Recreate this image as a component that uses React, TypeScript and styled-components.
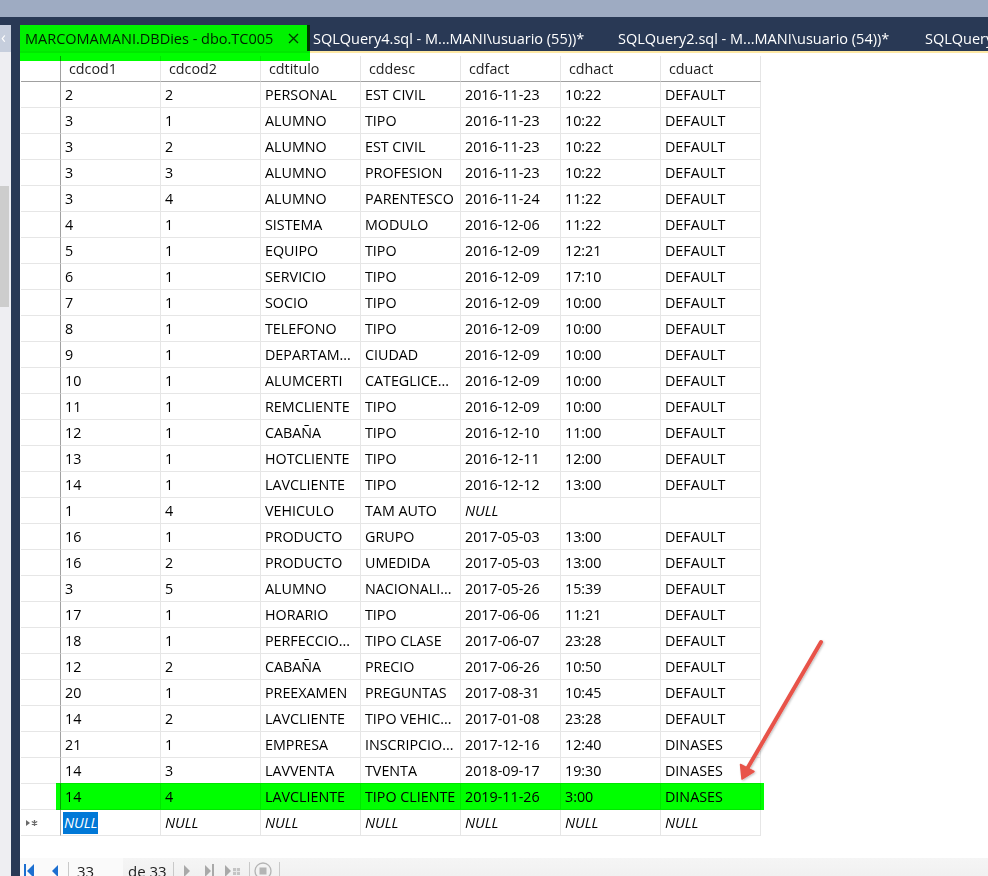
import React from 'react';
import styled, { createGlobalStyle, css } from 'styled-components';

const GlobalStyle = createGlobalStyle`
  html, body { margin: 0; padding: 0; background: #ffffff; }
  body { font-family: "Open Sans", "Noto Sans", "DejaVu Sans", sans-serif; }
  * { box-sizing: border-box; }
`;

const FONT = `"Open Sans", "Noto Sans", "DejaVu Sans", sans-serif`;

const Screen = styled.div`
  position: relative;
  width: 988px;
  height: 876px;
  overflow: hidden;
  display: flex;
  flex-direction: column;
  background: #ffffff;
  font-family: ${FONT};
`;

const TitleStrip = styled.div`
  height: 17px;
  flex: none;
  background: #9eabc2;
`;

const Body = styled.div`
  flex: 1;
  min-height: 0;
  display: flex;
  background: #293955;
`;

const SidePanel = styled.div`
  width: 11px;
  flex: none;
  margin-top: 8px;
  display: flex;
  flex-direction: column;
  background: #eeeef2;
`;

const SideHeader = styled.div`
  height: 27px;
  flex: none;
  background: #c6cedd;
  color: #ffffff;
  font-size: 16px;
  line-height: 24px;
  padding-left: 1px;
  overflow: hidden;
`;

const SideTrack = styled.div`
  flex: 1;
  display: flex;
  flex-direction: column;
  padding-top: 134px;
`;

const SideThumb = styled.div`
  width: 9px;
  height: 121px;
  background: #cdcdcd;
`;

const Workspace = styled.div`
  margin-left: 9px;
  flex: 1;
  min-width: 0;
  min-height: 0;
  display: flex;
  flex-direction: column;
`;

const TabWell = styled.div`
  height: 34px;
  flex: none;
  padding-top: 8px;
  display: flex;
  align-items: stretch;
  white-space: nowrap;
`;

const Tab = styled.div<{ $w: number; $active?: boolean }>`
  width: ${(p) => p.$w}px;
  flex: none;
  display: flex;
  align-items: center;
  gap: 15px;
  padding-left: ${(p) => (p.$active ? 5 : 6)}px;
  font-size: 14.5px;
  color: #ffffff;
  overflow: hidden;
  ${(p) =>
    p.$active &&
    css`
      background: #fff29d;
      color: #1e1e1e;
    `}
`;

const TabRule = styled.div`
  height: 2px;
  flex: none;
  background: #fde8a5;
`;

const Documentpane = styled.div`
  flex: 1;
  min-height: 0;
  overflow: hidden;
  display: flex;
  flex-direction: column;
  background: #ffffff;
  padding-top: 3px;
`;

const Grid = styled.div`
  width: 741px;
  flex: none;
  display: flex;
  flex-direction: column;
`;

const Row = styled.div<{ $mark?: boolean }>`
  position: relative;
  display: grid;
  grid-template-columns: 41px repeat(7, 100px);
  height: 26px;
  ${(p) =>
    p.$mark &&
    css`
      &::after {
        content: '';
        position: absolute;
        left: 36px;
        right: -3px;
        top: -1px;
        bottom: 0;
        background: #00ff00;
        mix-blend-mode: multiply;
        pointer-events: none;
      }
    `}
`;

const Cell = styled.div<{ $header?: boolean; $italic?: boolean }>`
  height: 26px;
  border-right: 1px solid #e6e6e6;
  border-bottom: 1px solid ${(p) => (p.$header ? '#a0a0a0' : '#e6e6e6')};
  padding: 1px 0 0 ${(p) => (p.$header ? 8 : 4)}px;
  font-size: 14.3px;
  line-height: 24px;
  white-space: nowrap;
  overflow: hidden;
  color: ${(p) => (p.$header ? '#1e1e1e' : '#000000')};
  font-style: ${(p) => (p.$italic ? 'italic' : 'normal')};
`;

const RowHead = styled.div<{ $header?: boolean }>`
  height: 26px;
  border-right: 1px solid #a0a0a0;
  border-bottom: 1px solid ${(p) => (p.$header ? '#a0a0a0' : '#e6e6e6')};
  margin-left: 1px;
  display: flex;
  align-items: center;
  padding-left: 5px;
`;

const Selected = styled.span`
  background: #0078d7;
  color: #ffffff;
  padding: 1px 1px 2px 1px;
  margin-left: -2px;
`;

const Gap = styled.div`
  height: 22px;
  flex: none;
`;

const NavBar = styled.div`
  height: 30px;
  flex: none;
  display: flex;
  align-items: flex-start;
  background: linear-gradient(#f5f5f5, #eeeeee);
  font-size: 15px;
  color: #1e1e1e;
`;

const NavLead = styled.div`
  display: flex;
  align-items: flex-start;
  height: 100%;
  padding: 6px 0 0 4px;
  background: #fafafa;
`;

const NavIcon = styled.svg<{ $gap?: number }>`
  display: block;
  flex: none;
  margin-right: ${(p) => p.$gap ?? 0}px;
`;

const NavSep = styled.div<{ $ml: number }>`
  width: 1px;
  height: 20px;
  margin-top: 4px;
  margin-left: ${(p) => p.$ml}px;
  background: #c9c9c9;
  flex: none;
`;

const PageBox = styled.div`
  width: 54px;
  height: 100%;
  padding: 3px 0 0 8px;
  line-height: 20px;
  background: #fafafa;
  flex: none;
`;

const PageOf = styled.div`
  margin-left: 5px;
  padding-top: 3px;
  line-height: 20px;
  width: 45px;
  flex: none;
`;

const NavRest = styled.div`
  display: flex;
  align-items: flex-start;
  padding-top: 6px;
`;

const HighlightTab = styled.div`
  position: absolute;
  left: 20px;
  top: 25px;
  width: 290px;
  height: 36px;
  background: #00ff00;
  mix-blend-mode: multiply;
  pointer-events: none;
`;

const ArrowLayer = styled.svg`
  position: absolute;
  left: 0;
  top: 0;
  pointer-events: none;
`;

const CloseGlyph = () => (
  <svg width="11" height="11" viewBox="0 0 11 11">
    <path d="M1 1 L10 10 M10 1 L1 10" stroke="#3a3a3a" strokeWidth="1.4" />
  </svg>
);

const columns = ['cdcod1', 'cdcod2', 'cdtitulo', 'cddesc', 'cdfact', 'cdhact', 'cduact'];

type R = [string, string, string, string, string, string, string];

const rows: R[] = [
  ['2', '2', 'PERSONAL', 'EST CIVIL', '2016-11-23', '10:22', 'DEFAULT'],
  ['3', '1', 'ALUMNO', 'TIPO', '2016-11-23', '10:22', 'DEFAULT'],
  ['3', '2', 'ALUMNO', 'EST CIVIL', '2016-11-23', '10:22', 'DEFAULT'],
  ['3', '3', 'ALUMNO', 'PROFESION', '2016-11-23', '10:22', 'DEFAULT'],
  ['3', '4', 'ALUMNO', 'PARENTESCO', '2016-11-24', '11:22', 'DEFAULT'],
  ['4', '1', 'SISTEMA', 'MODULO', '2016-12-06', '11:22', 'DEFAULT'],
  ['5', '1', 'EQUIPO', 'TIPO', '2016-12-09', '12:21', 'DEFAULT'],
  ['6', '1', 'SERVICIO', 'TIPO', '2016-12-09', '17:10', 'DEFAULT'],
  ['7', '1', 'SOCIO', 'TIPO', '2016-12-09', '10:00', 'DEFAULT'],
  ['8', '1', 'TELEFONO', 'TIPO', '2016-12-09', '10:00', 'DEFAULT'],
  ['9', '1', 'DEPARTAM...', 'CIUDAD', '2016-12-09', '10:00', 'DEFAULT'],
  ['10', '1', 'ALUMCERTI', 'CATEGLICE...', '2016-12-09', '10:00', 'DEFAULT'],
  ['11', '1', 'REMCLIENTE', 'TIPO', '2016-12-09', '10:00', 'DEFAULT'],
  ['12', '1', 'CABAÑA', 'TIPO', '2016-12-10', '11:00', 'DEFAULT'],
  ['13', '1', 'HOTCLIENTE', 'TIPO', '2016-12-11', '12:00', 'DEFAULT'],
  ['14', '1', 'LAVCLIENTE', 'TIPO', '2016-12-12', '13:00', 'DEFAULT'],
  ['1', '4', 'VEHICULO', 'TAM AUTO', 'NULL', '', ''],
  ['16', '1', 'PRODUCTO', 'GRUPO', '2017-05-03', '13:00', 'DEFAULT'],
  ['16', '2', 'PRODUCTO', 'UMEDIDA', '2017-05-03', '13:00', 'DEFAULT'],
  ['3', '5', 'ALUMNO', 'NACIONALI...', '2017-05-26', '15:39', 'DEFAULT'],
  ['17', '1', 'HORARIO', 'TIPO', '2017-06-06', '11:21', 'DEFAULT'],
  ['18', '1', 'PERFECCIO...', 'TIPO CLASE', '2017-06-07', '23:28', 'DEFAULT'],
  ['12', '2', 'CABAÑA', 'PRECIO', '2017-06-26', '10:50', 'DEFAULT'],
  ['20', '1', 'PREEXAMEN', 'PREGUNTAS', '2017-08-31', '10:45', 'DEFAULT'],
  ['14', '2', 'LAVCLIENTE', 'TIPO VEHIC...', '2017-01-08', '23:28', 'DEFAULT'],
  ['21', '1', 'EMPRESA', 'INSCRIPCIO...', '2017-12-16', '12:40', 'DINASES'],
  ['14', '3', 'LAVVENTA', 'TVENTA', '2018-09-17', '19:30', 'DINASES'],
  ['14', '4', 'LAVCLIENTE', 'TIPO CLIENTE', '2019-11-26', '3:00', 'DINASES'],
];

const NewRowMark = () => (
  <svg width="12" height="10" viewBox="0 0 12 10">
    <path d="M0 2 L4 5 L0 8 Z" fill="#6a6a6a" />
    <path d="M8.5 2 V8 M5.8 3.5 L11.2 6.5 M11.2 3.5 L5.8 6.5" stroke="#6a6a6a" strokeWidth="1.3" />
  </svg>
);

export default function App() {
  return (
    <>
      <GlobalStyle />
      <Screen>
        <TitleStrip />
        <Body>
          <SidePanel>
            <SideHeader>‹</SideHeader>
            <SideTrack>
              <SideThumb />
            </SideTrack>
          </SidePanel>
          <Workspace>
            <TabWell>
              <Tab $w={287} $active>
                <span>MARCOMAMANI.DBDies - dbo.TC005</span>
                <CloseGlyph />
              </Tab>
              <Tab $w={305}>SQLQuery4.sql - M...MANI\usuario (55))*</Tab>
              <Tab $w={307}>SQLQuery2.sql - M...MANI\usuario (54))*</Tab>
              <Tab $w={200}>SQLQuery1.sql - M...MANI\usuario (53))*</Tab>
            </TabWell>
            <TabRule />
            <Documentpane>
              <Grid>
                <Row>
                  <RowHead $header />
                  {columns.map((c) => (
                    <Cell key={c} $header>
                      {c}
                    </Cell>
                  ))}
                </Row>
                {rows.map((r, i) => (
                  <Row key={i} $mark={i === rows.length - 1}>
                    <RowHead />
                    {r.map((v, j) => (
                      <Cell key={j} $italic={v === 'NULL'}>
                        {v}
                      </Cell>
                    ))}
                  </Row>
                ))}
                <Row>
                  <RowHead>
                    <NewRowMark />
                  </RowHead>
                  {columns.map((c, j) => (
                    <Cell key={c} $italic>
                      {j === 0 ? <Selected>NULL</Selected> : 'NULL'}
                    </Cell>
                  ))}
                </Row>
              </Grid>
              <Gap />
              <NavBar>
                <NavLead>
                  <NavIcon $gap={17} width="10" height="14" viewBox="0 0 10 14">
                    <rect x="0" y="0" width="2" height="14" fill="#1c6fd0" />
                    <path d="M10 0 L3 7 L10 14 Z" fill="#1c6fd0" />
                  </NavIcon>
                  <NavIcon width="8" height="14" viewBox="0 0 8 14">
                    <path d="M7 1 L1 7 L7 13 Z" fill="#1c6fd0" />
                  </NavIcon>
                </NavLead>
                <NavLead style={{ padding: 0 }}>
                  <NavSep $ml={9} />
                </NavLead>
                <PageBox>33</PageBox>
                <PageOf>de 33</PageOf>
                <NavSep $ml={0} />
                <NavRest>
                  <NavIcon $gap={14} width="8" height="14" viewBox="0 0 8 14" style={{ marginLeft: 9 }}>
                    <path d="M1 1 L7 7 L1 13 Z" fill="#a9a9a9" />
                  </NavIcon>
                  <NavIcon $gap={11} width="9" height="14" viewBox="0 0 9 14">
                    <path d="M0 1 L6 7 L0 13 Z" fill="#a9a9a9" />
                    <rect x="7" y="0" width="2" height="14" fill="#a9a9a9" />
                  </NavIcon>
                  <NavIcon width="16" height="14" viewBox="0 0 16 14">
                    <path d="M0 1 L6 7 L0 13 Z" fill="#a9a9a9" />
                    <rect x="8" y="4" width="7" height="7" fill="#c4c4c4" />
                    <path d="M8 7.5 H15 M11.5 4 V11" stroke="#e8e8e8" strokeWidth="1" />
                  </NavIcon>
                </NavRest>
                <NavSep $ml={8} />
                <NavRest>
                  <NavIcon width="18" height="18" viewBox="0 0 18 18" style={{ marginLeft: 4, marginTop: -2 }}>
                    <circle cx="9" cy="9" r="8" fill="none" stroke="#b4b4b4" strokeWidth="1.3" />
                    <rect x="5.5" y="5.5" width="7" height="7" fill="#b4b4b4" />
                  </NavIcon>
                </NavRest>
                <NavSep $ml={7} />
              </NavBar>
            </Documentpane>
          </Workspace>
        </Body>
        <HighlightTab />
        <ArrowLayer width="988" height="876" viewBox="0 0 988 876">
          <defs>
            <filter id="arrowShadow" x="-20%" y="-20%" width="140%" height="140%">
              <feDropShadow dx="1" dy="1" stdDeviation="1.2" floodColor="#000" floodOpacity="0.25" />
            </filter>
          </defs>
          <g filter="url(#arrowShadow)">
            <line x1="821" y1="642" x2="747" y2="769" stroke="#e8534a" strokeWidth="4" strokeLinecap="round" />
            <path d="M742 779 L740.5 764.5 L754 771.5 Z" fill="#e8534a" stroke="#e8534a" strokeWidth="1.5" strokeLinejoin="round" />
          </g>
        </ArrowLayer>
      </Screen>
    </>
  );
}
